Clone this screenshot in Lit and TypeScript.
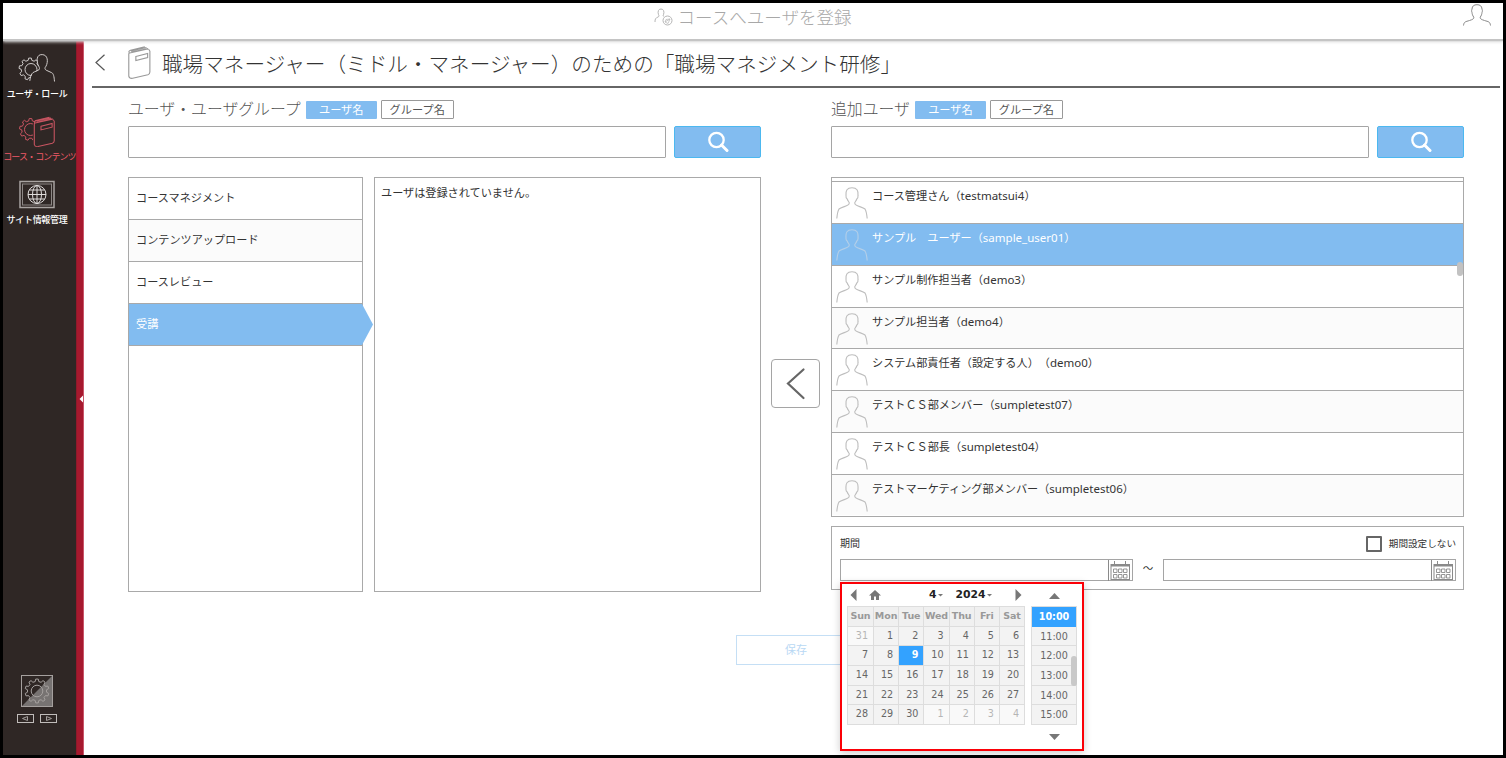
import { LitElement, html, css, svg } from "lit";
import { customElement } from "lit/decorators.js";
import { classMap } from "lit/directives/class-map.js";

// Outline of a cog with flat teeth, centred on (cx, cy).
function gear(cx: number, cy: number, outer: number, inner: number, teeth: number): string {
  const step = (Math.PI * 2) / teeth;
  const point = (radius: number, angle: number) =>
    `${(cx + radius * Math.cos(angle)).toFixed(2)} ${(cy + radius * Math.sin(angle)).toFixed(2)}`;
  const parts: string[] = [];
  for (let i = 0; i < teeth; i++) {
    const a = i * step - Math.PI / 2;
    parts.push(point(inner, a - step * 0.3), point(outer, a - step * 0.17), point(outer, a + step * 0.17), point(inner, a + step * 0.3));
  }
  return `M${parts.join("L")}Z`;
}

const PERSON =
  "M.8 31.500c.4-4 .9-7.500 2.200-9.500 1.400-1.200 5-2.200 8-3.400 1.500-.6 2.300-1.400 2.300-2.600-.1-1-1.500-2-2.100-4-.9-.6-1.400-2-1.200-3.600C9.600 3.500 11 .8 16 .8s6.400 2.700 6 7.600c.2 1.600-.3 3-1.200 3.600-.6 2-2 3-2.100 4 0 1.200.8 2 2.300 2.600 3 1.200 6.600 2.200 8 3.400 1.300 2 1.800 5.500 2.200 9.500";

const searchIcon = html`<svg width="22" height="22" viewBox="0 0 22 22" fill="none" stroke="#fff">
  <circle cx="9.500" cy="9" r="7.200" stroke-width="2.300" />
  <path d="M14.500 14l5.500 5.500" stroke-width="3" stroke-linecap="round" />
</svg>`;

const bookPaths = svg`<path d="M2.500 7L17.500 3.300q2.500-.3 3 1.800v21q0 2-1.800 2.700L5.200 32.300q-3 .5-3.500-2.200V8.500Q1.500 7.200 2.500 7zM2.300 7Q1 5.200 3.200 4.200L16 .8M4 6L19 2.500M3.500 5L17.500 1.600M8 10.500l10.500-3v4L8 14.500z"/>`;

const calendarIcon = html`<svg width="24" height="21" viewBox="0 0 24 21" fill="none" stroke="#8a8a8a">
  <path d="M.5 0v21" />
  <rect x="3" y="4.500" width="18.500" height="15" />
  <path d="M3 5.500h18.500" stroke-width="2" />
  <path d="M6.500 1v4M17.500 1v4" />
  <path d="M5.500 9h3.500v3.500H5.500zM10.500 9h3.500v3.500h-3.500zM15.500 9h3.500v3.500h-3.500zM5.500 14.500h3.500V18H5.500zM10.500 14.500h3.500V18h-3.500zM15.500 14.500h3.500V18h-3.500z" stroke-width=".9" />
</svg>`;

const USERS = [
  { name: "コース管理さん（", id: "testmatsui4" },
  { name: "サンプル　ユーザー（", id: "sample_user01", selected: true },
  { name: "サンプル制作担当者（", id: "demo3" },
  { name: "サンプル担当者（", id: "demo4" },
  { name: "システム部責任者（設定する人）（", id: "demo0" },
  { name: "テストＣＳ部メンバー（", id: "sumpletest07" },
  { name: "テストＣＳ部長（", id: "sumpletest04" },
  { name: "テストマーケティング部メンバー（", id: "sumpletest06" },
];

const ROLES = ["コースマネジメント", "コンテンツアップロード", "コースレビュー", "受講"];

@customElement("side-nav")
class SideNav extends LitElement {
  static styles = css`
    :host { display: flex; flex: none; width: 81px; }
    .bar { width: 73px; background: #2f2725; display: flex; flex-direction: column; align-items: center; }
    .items { padding-top: 14px; display: flex; flex-direction: column; }
    .item { width: 73px; height: 63px; display: flex; flex-direction: column; align-items: center; color: #fff; white-space: nowrap; }
    .item svg { display: block; height: 34px; flex: none; margin-right: 5px; }
    .label { line-height: 13px; font-weight: 500; font-size: 9px; letter-spacing: -0.3px; margin-right: 5px; }
    .course { color: #ee5a68; letter-spacing: -0.9px; margin-right: 0; font-weight: 400; }
    .foot { margin-top: auto; display: flex; flex-direction: column; align-items: center; gap: 7px; padding: 0 5px 32px 0; }
    .foot svg { display: block; }
    .strip { width: 8px; box-sizing: border-box; background: #a6192e; border-right: 1px solid #c9566a; border-left: 1px solid #8e1a2b; display: flex; align-items: center; justify-content: flex-end; padding-top: 4px; }
  `;
  render() {
    return html`
      <div class="bar">
        <div class="items">
          <div class="item">
            <svg width="38" height="34" viewBox="0 0 38 34" fill="none" stroke="#cfcbca" stroke-width="1">
              <clipPath id="cog-a"><path d="M0 0h20v17.500l-5 2.500-3 6-2 4H0z" /></clipPath>
              <g clip-path="url(#cog-a)"><path d=${gear(12, 16, 11, 8.8, 9)} /><circle cx="13" cy="16.500" r="6" /></g>
              <path d="M36.500 28.500c-.4-5-1-8-2.800-8.800l-5.500-2.500c-1.600-.9-1.600-2.500-.2-4 2.300-4.400 2-11.400-3.800-11.600-6-.3-5.600 6.400-4.200 10 .8 2 2.400 3.600.8 5.300-2.900 1.800-5.800 1.800-7 4-1.200 1.800-1.500 4-2 7" />
            </svg>
            <span class="label">ユーザ・ロール</span>
          </div>
          <div class="item">
            <svg width="38" height="34" viewBox="0 0 38 34" fill="none" stroke="#c95562" stroke-width="1">
              <clipPath id="cog-b"><path d="M0 0h18v7l-3 1v22H0z" /></clipPath>
              <g clip-path="url(#cog-b)"><path d=${gear(12.5, 13.5, 11, 8.8, 9)} /><circle cx="12.500" cy="13.500" r="6" /></g>
              <g transform="translate(14.500 .5) scale(1.06 .93)">${bookPaths}</g>
            </svg>
            <span class="label course">コース・コンテンツ</span>
          </div>
          <div class="item">
            <svg width="36" height="34" viewBox="0 0 36 34" fill="none" stroke="#a8a3a1" stroke-width="1">
              <rect x="1" y="2.500" width="34" height="26" stroke-width="1.500" />
              <rect x="3.500" y="5" width="29" height="21" stroke="#8d8886" />
              <g stroke="#e0dddc"><circle cx="18" cy="15.500" r="9" /><ellipse cx="18" cy="15.500" rx="4.500" ry="9" /><path d="M18 6.500v18M9 15.500h18M10.500 11h15M10.500 20h15" /></g>
            </svg>
            <span class="label">サイト情報管理</span>
          </div>
        </div>
        <div class="foot">
          <svg width="32" height="32" viewBox="0 0 32 32" fill="none" stroke="#a5a09e">
            <path d="M32 0v32H0z" fill="#777372" stroke="none" />
            <rect x=".5" y=".5" width="31" height="31" />
            <path d=${gear(16, 16, 12, 9.6, 10)} /><circle cx="16" cy="16" r="5.800" />
          </svg>
          <svg width="40" height="9" viewBox="0 0 40 9" fill="none" stroke="#c0bcba">
            <rect x=".5" y=".5" width="16" height="8" /><path d="M10.500 2.500v4l-5-2z" stroke="#a5a09e" />
            <rect x="23.500" y=".5" width="16" height="8" /><path d="M29.500 2.500v4l5-2z" stroke="#a5a09e" />
          </svg>
        </div>
      </div>
      <div class="strip"><svg width="4" height="8" viewBox="0 0 4 8"><path d="M4 .5v7L.5 4z" fill="#fff" /></svg></div>
    `;
  }
}

@customElement("date-picker")
class DatePicker extends LitElement {
  static styles = css`
    :host { box-sizing: border-box; display: flex; width: 244px; height: 169px; border: 2px solid #fb0007; background: #fff; padding: 0 6px 0 5px; gap: 6px; box-shadow: 0 2px 8px rgba(0, 0, 0, 0.2); font-family: "DejaVu Sans", sans-serif; color: #666; font-size: 9.600px; }
    .month { width: 178px; }
    .head { height: 22px; display: grid; grid-template-columns: 19px 60px 26.500px 1fr auto; align-items: center; box-sizing: border-box; font-weight: bold; color: #222; font-size: 10.800px; padding: 0 3px 0 3px; }
    .head svg { display: block; }
    .pick { display: flex; align-items: center; gap: 1px; white-space: nowrap; line-height: 20px; height: 22px; }
    .grid { display: grid; grid-template-columns: 26px repeat(6, 25.200px); grid-auto-rows: 19.700px; border: solid #ddd; border-width: 1px 0 0 1px; box-sizing: border-box; width: 178px; }
    .cell { box-sizing: border-box; border: solid #ddd; border-width: 0 1px 1px 0; background: #f3f3f3; text-align: right; padding-right: 5px; line-height: 18.500px; }
    .dow { font-weight: bold; color: #999; background: #f0f0f0; text-align: center; padding: 0; font-size: 9.500px; line-height: 18px; letter-spacing: -0.1px; }
    .out { color: #b5b5b5; background: #f9f9f9; }
    .now { background: #33a2ff; color: #fff; font-weight: bold; }
    .time { width: 46px; display: flex; flex-direction: column; align-items: center; }
    .arrow { height: 22px; display: flex; align-items: center; padding-top: 1px; box-sizing: border-box; }
    .slots { width: 46px; height: 119px; box-sizing: border-box; border: 1px solid #ddd; border-bottom: 0; position: relative; }
    .slot { height: 19.700px; box-sizing: border-box; border-bottom: 1px solid #ddd; background: #f3f3f3; text-align: center; line-height: 19px; }
    .slot.now { background: #33a2ff; border-color: #33a2ff; }
    .thumb { position: absolute; right: -1px; top: 49px; width: 6px; height: 30px; border-radius: 3px; background: #c9c9c9; }
  `;
  render() {
    const days = [31, ...Array.from({ length: 30 }, (_, i) => i + 1), 1, 2, 3, 4];
    const drop = html`<svg width="5" height="3" viewBox="0 0 5 3"><path d="M0 0h5L2.500 2.500z" fill="#777" /></svg>`;
    return html`
      <div class="month">
        <div class="head">
          <svg width="7" height="12" viewBox="0 0 7 12"><path d="M6.500 0v12L.5 6z" fill="#777" /></svg>
          <svg width="12" height="10" viewBox="0 0 12 10"><path d="M6 0l6 5.500h-2V10H7V6.500H5V10H2V5.500H0z" fill="#777" /></svg>
          <span class="pick">4${drop}</span>
          <span class="pick">2024${drop}</span>
          <svg width="7" height="12" viewBox="0 0 7 12"><path d="M.5 0v12l6-6z" fill="#777" /></svg>
        </div>
        <div class="grid">
          ${["Sun", "Mon", "Tue", "Wed", "Thu", "Fri", "Sat"].map((d) => html`<div class="cell dow">${d}</div>`)}
          ${days.map((d, i) => html`<div class=${classMap({ cell: true, out: i === 0 || i > 30, now: i === 9 })}>${d}</div>`)}
        </div>
      </div>
      <div class="time">
        <div class="arrow"><svg width="11" height="6" viewBox="0 0 11 6"><path d="M0 6L5.500 0 11 6z" fill="#777" /></svg></div>
        <div class="slots">
          ${[10, 11, 12, 13, 14, 15].map((h) => html`<div class=${classMap({ slot: true, now: h === 10 })}>${h}:00</div>`)}
          <div class="thumb"></div>
        </div>
        <div class="arrow"><svg width="11" height="6" viewBox="0 0 11 6"><path d="M0 0L5.500 6 11 0z" fill="#777" /></svg></div>
      </div>
    `;
  }
}

@customElement("search-box")
class SearchBox extends LitElement {
  static properties = { heading: {} };
  declare heading: string;
  static styles = css`
    :host { display: block; }
    .head { display: flex; height: 38px; box-sizing: border-box; padding-top: 13px; }
    .title { font-size: 15.850px; line-height: 16px; margin-right: 5px; font-weight: 300; color: #555; white-space: nowrap; }
    .tag { box-sizing: border-box; height: 18px; width: 71px; line-height: 17px; border-radius: 1px; background: #82bcf0; color: #fff; text-align: center; font-size: 11.200px; }
    .plain { width: 73px; height: 19px; margin: -1px 0 0 4px; background: #fff; border: 1px solid #999; color: #555; line-height: 17px; }
    .line { display: grid; grid-template-columns: 1fr 87px; gap: 8px; height: 32px; }
    .input { border: 1px solid #a5a5a5; border-radius: 1px; }
    .go { border: 1px solid #4cb8f0; border-radius: 2px; background: #82bcf0; display: flex; align-items: center; justify-content: center; }
  `;
  render() {
    return html`
      <div class="head"><span class="title">${this.heading}</span><span class="tag">ユーザ名</span><span class="tag plain">グループ名</span></div>
      <div class="line"><div class="input"></div><div class="go">${searchIcon}</div></div>
    `;
  }
}

@customElement("app-root")
class AppRoot extends LitElement {
  static styles = css`
    :host { display: flex; flex-direction: column; box-sizing: border-box; width: 1506px; height: 758px; border: 3px solid #000; background: #fff; color: #333; font-family: "Noto Sans CJK JP", sans-serif; font-size: 11.150px; overflow: hidden; text-spacing-trim: space-all; }
    .top { flex: none; height: 36px; display: grid; grid-template-columns: 1fr auto 1fr; align-items: center; box-shadow: 0 2px 1px #c4c4c4, 0 3px 3px #ddd; position: relative; z-index: 1; padding-right: 12px; }
    .page { grid-column: 2; display: flex; align-items: center; gap: 5px; font-size: 17.500px; font-weight: 300; color: #a8a8a8; line-height: 26px; padding: 0 0 9px 11px; }
    .me { justify-self: end; align-self: start; padding-top: 1px; }
    .me svg { display: block; }
    .body { flex: 1; display: flex; min-height: 0; }
    .main { flex: 1; padding: 0 3px 0 8px; }
    .title { height: 49px; box-sizing: border-box; border-bottom: 2px solid #666; display: flex; align-items: center; font-size: 20.620px; font-weight: 300; color: #333; white-space: nowrap; padding-left: 3px; }
    .title svg { flex: none; display: block; }
    .book { margin: 0 11px 0 23px; }
    .cols { display: grid; grid-template-columns: 633px 70px 633px; margin-left: 36px; }
    .panels { margin-top: 19px; display: grid; grid-template-columns: 235px 387px; gap: 11px; height: 415px; }
    .panel { border: 1px solid #a9a9a9; box-sizing: border-box; }
    .role { height: 42px; box-sizing: border-box; border-bottom: 1px solid #a9a9a9; padding-left: 7px; line-height: 39px; }
    .alt { background: #fbfbfb; }
    .role.on { background: #82bcf0; color: #fff; position: relative; }
    .tip { position: absolute; left: 100%; top: 0; width: 11px; height: 41px; background: #82bcf0; clip-path: polygon(0 0, 100% 50%, 0 100%); }
    .empty { padding: 5px 6px; line-height: 18px; }
    .move { margin: 271px 0 0 10px; width: 49px; height: 49px; box-sizing: border-box; border: 1px solid #a5a5a5; border-radius: 4px; display: flex; align-items: center; justify-content: center; }
    .users { margin-top: 19px; height: 340px; box-sizing: border-box; border: 1px solid #a9a9a9; position: relative; }
    .peek { height: 3px; border-bottom: 1px solid #a9a9a9; }
    .user { height: 41.850px; box-sizing: border-box; border-bottom: 1px solid #a9a9a9; display: flex; gap: 4px; padding: 5px 0 0 4px; white-space: nowrap; line-height: 17px; }
    .user:nth-child(9) { border-bottom: 0; height: 40px; }
    .user svg { display: block; flex: none; }
    .user.sel { background: #82bcf0; color: #fff; }
    .latin { font-family: "Noto Sans", sans-serif; font-size: 11.500px; }
    .thumb { position: absolute; right: 0; top: 84px; width: 6px; height: 14px; border-radius: 3px; background: #c2c2c2; }
    .period { margin-top: 9px; height: 64px; box-sizing: border-box; border: 1px solid #a9a9a9; padding: 6px 7px 0 8px; position: relative; font-size: 10px; }
    .cap { display: flex; justify-content: space-between; height: 26px; line-height: 19px; }
    .check { display: flex; align-items: center; height: 21px; gap: 7px; font-size: 9.600px; }
    .box { width: 12px; height: 12px; border: 2px solid #666; border-radius: 1px; }
    .range { display: flex; height: 22px; }
    .date { box-sizing: border-box; width: 293px; border: 1px solid #a5a5a5; display: flex; justify-content: flex-end; }
    .date svg { display: block; }
    .tilde { width: 30px; text-align: center; font-size: 10.500px; line-height: 18px; }
    .pop { position: absolute; left: 8px; top: 55px; z-index: 2; }
    .save { margin: 43px 0 0 644px; width: 120px; height: 30px; box-sizing: border-box; border: 1px solid #c5dff5; color: #b9d8f4; text-align: center; line-height: 26px; font-size: 11px; }
  `;

  person(color: string) {
    return html`<svg width="32" height="32" viewBox="0 0 32 32" fill="none" stroke=${color} stroke-width="1.100"><path d=${PERSON} /></svg>`;
  }

  render() {
    return html`
      <div class="top">
        <div class="page">
          <svg width="19" height="18" viewBox="0 0 19 18" fill="none" stroke="#b5b5b5">
            <path d="M1 14c0-3 .5-4 3-5 1.500-.6 1-1.500.4-2.700C3.500 3.500 4.500 1 7 1s3.500 2.500 2.600 5.300C9 7.500 9 8 10 8.500" />
            <circle cx="13.500" cy="12.500" r="4.500" /><path d="M11 14l5-3-2 4.500zM11 14l1-2.500 4-.5" stroke-width=".7" />
          </svg>
          <span>コースへユーザを登録</span>
        </div>
        <div class="me"><svg width="28" height="22" viewBox="0 0 28 22" fill="none" stroke="#888"><path d="M.5 21.500c.5-4 2-3.700 6-5 3-1 4.500-1.500 4.300-3.300C9.500 11.500 9.200 10 9 8.500 8.200 6.500 8.800 6 9 5c.2-3 2-4.300 5-4.300s4.800 1.300 5 4.300c.2 1 .8 1.500 0 3.500-.2 1.500-.5 3-1.800 4.700-.2 1.800 1.300 2.300 4.300 3.300 4 1.300 5.500 1 6 5" /></svg></div>
      </div>
      <div class="body">
        <side-nav></side-nav>
        <div class="main">
          <div class="title">
            <svg width="10" height="17" viewBox="0 0 10 17" fill="none" stroke="#555" stroke-width="1.200"><path d="M9.500 .8L1 8.500l8.500 7.700" /></svg>
            <svg class="book" width="23" height="33" viewBox="1 0 20.500 33" preserveAspectRatio="none" fill="none" stroke="#999">${bookPaths}</svg>
            <span>職場マネージャー（ミドル・マネージャー）のための「職場マネジメント研修」</span>
          </div>
          <div class="cols">
            <div>
              <search-box .heading=${"ユーザ・ユーザグループ"}></search-box>
              <div class="panels">
                <div class="panel">
                  ${ROLES.map((r, i) => html`<div class=${classMap({ role: true, alt: i === 1, on: i === 3 })}>${r}${i === 3 ? html`<i class="tip"></i>` : ""}</div>`)}
                </div>
                <div class="panel empty">ユーザは登録されていません。</div>
              </div>
            </div>
            <div class="move"><svg width="20" height="34" viewBox="0 0 20 34" fill="none" stroke="#666" stroke-width="2.200" stroke-linecap="round"><path d="M17.500 2.500L2 16.500l15.500 14.500" /></svg></div>
            <div>
              <search-box .heading=${"追加ユーザ"}></search-box>
              <div class="users">
                <div class="peek"></div>
                ${USERS.map((u, i) => html`<div class=${classMap({ user: true, alt: i % 2 === 1, sel: !!u.selected })}>${this.person(u.selected ? "#b4cfe8" : "#bdbdbd")}<span>${u.name}<span class="latin">${u.id}</span>）</span></div>`)}
                <div class="thumb"></div>
              </div>
              <div class="period">
                <div class="cap"><span>期間</span><span class="check"><i class="box"></i>期間設定しない</span></div>
                <div class="range"><div class="date">${calendarIcon}</div><span class="tilde">～</span><div class="date">${calendarIcon}</div></div>
                <date-picker class="pop"></date-picker>
              </div>
            </div>
          </div>
          <div class="save">保存</div>
        </div>
      </div>
    `;
  }
}
